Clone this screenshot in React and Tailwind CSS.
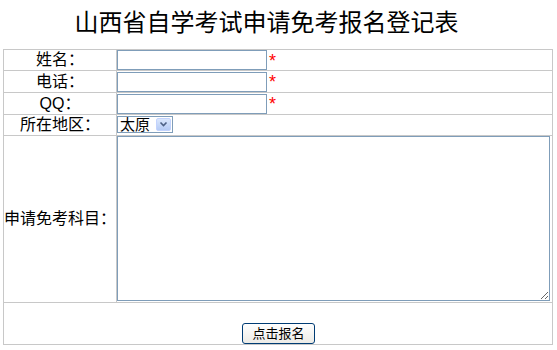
import React from "react";

const font = { fontFamily: '"Liberation Sans", "Noto Sans CJK SC", sans-serif' };

function Star() {
  return <span className="text-[#ff0000] text-[18px] leading-[14px] ml-[2px] mt-[4px]">*</span>;
}

function Label({ h, children }) {
  return (
    <div className={"border-r border-b border-[#c8c8c8] flex items-center justify-center text-[16px] leading-[18px] text-black whitespace-nowrap " + h}>
      {children}
    </div>
  );
}

export default function App() {
  const input = "w-[150px] h-[20px] border border-[#7f9db9] bg-white outline-none";
  const fieldCell = "border-r border-b border-[#c8c8c8] flex items-start";
  return (
    <div className="w-[557px] h-[350px] bg-white overflow-hidden" style={font}>
      <div className="h-[49px] pr-[24px] pt-[7px] text-center text-[24px] leading-[32px] text-black">
        山西省自学考试申请免考报名登记表
      </div>
      <div className="ml-[3px] w-[550px] border-l border-t border-[#c8c8c8] grid grid-cols-[113px_436px]">
        <Label h="h-[21px]">姓名：</Label>
        <div className={fieldCell + " h-[21px]"}>
          <input className={input} />
          <Star />
        </div>

        <Label h="h-[22px]">电话：</Label>
        <div className={fieldCell + " h-[22px]"}>
          <input className={input + " mt-[1px]"} />
          <Star />
        </div>

        <Label h="h-[22px]">QQ：</Label>
        <div className={fieldCell + " h-[22px]"}>
          <input className={input + " mt-[1px]"} />
          <Star />
        </div>

        <Label h="h-[21px]">所在地区：</Label>
        <div className={fieldCell + " h-[21px]"}>
          <div className="flex items-center h-[17px] mt-[1px] border border-[#7f9db9] bg-white">
            <span className="px-[2px] text-[15px] leading-[15px] text-black">太原</span>
            <span className="ml-[4px] w-[15px] h-[13px] mr-[1px] rounded-[2px] bg-gradient-to-b from-[#dbe7fc] to-[#b5cbf5] border border-[#c3d3fd] flex items-center justify-center">
              <svg width="9" height="7" viewBox="0 0 9 7">
                <path d="M1.5 1.5 L4.5 4.5 L7.5 1.5" stroke="#4d6185" strokeWidth="1.6" fill="none" />
              </svg>
            </span>
          </div>
        </div>

        <Label h="h-[167px]">申请免考科目：</Label>
        <div className={fieldCell + " h-[167px]"}>
          <textarea className="w-[433px] h-[165px] border border-[#7f9db9] bg-white outline-none resize" />
        </div>

        <div className="col-span-2 h-[42px] border-r border-b border-[#c8c8c8] flex justify-center items-end">
          <button className="w-[73px] h-[21px] ml-[1px] rounded-[3px] border border-[#003c74] bg-gradient-to-b from-white to-[#ecebe6] text-[13px] leading-[19px] text-black">
            点击报名
          </button>
        </div>
      </div>
    </div>
  );
}
